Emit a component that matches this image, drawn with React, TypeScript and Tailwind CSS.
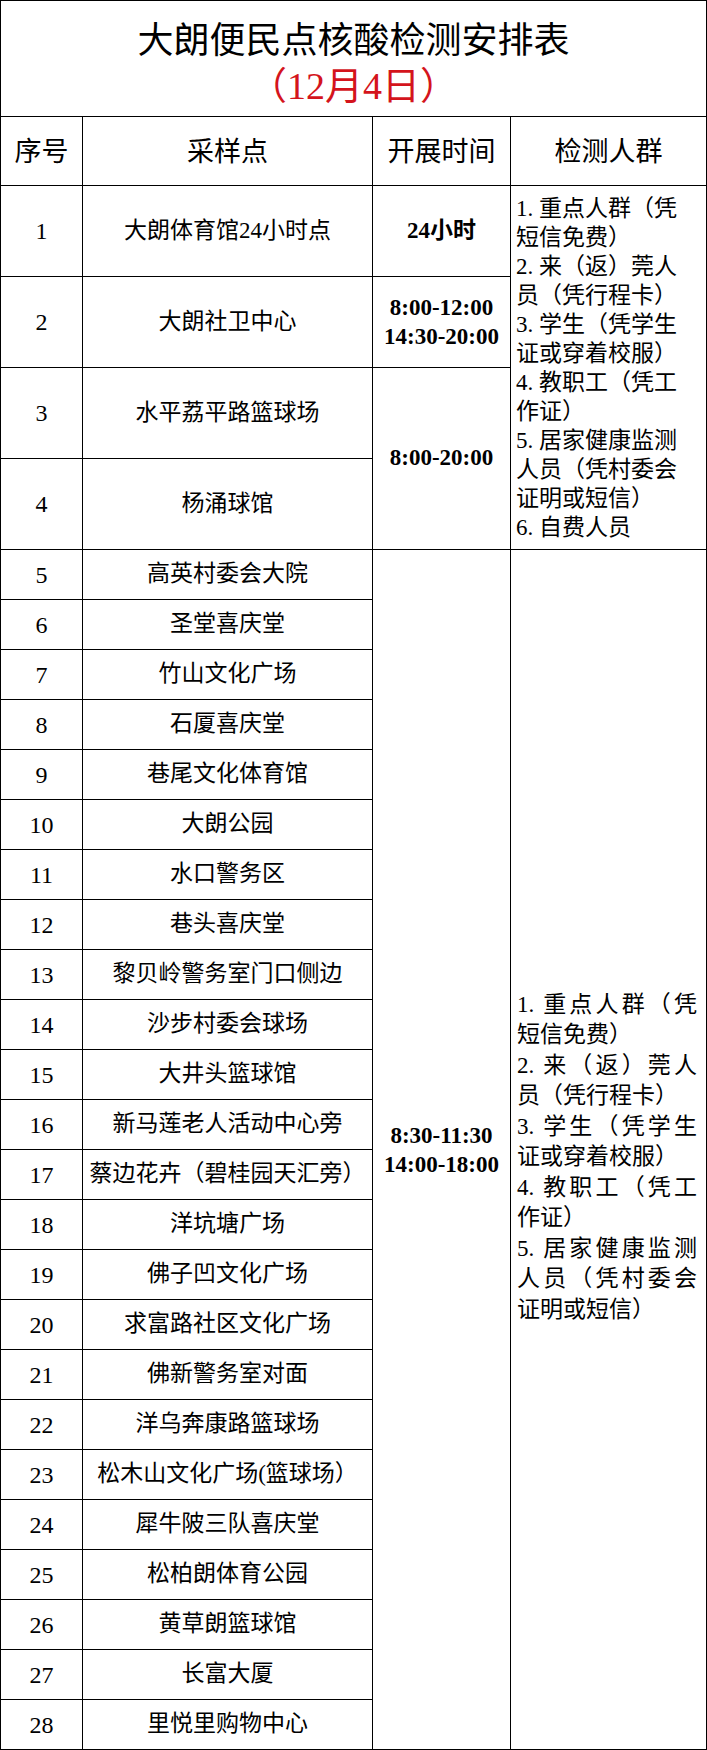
import React from "react";

const topRows = [
  { n: "1", name: "大朗体育馆24小时点" },
  { n: "2", name: "大朗社卫中心" },
  { n: "3", name: "水平荔平路篮球场" },
  { n: "4", name: "杨涌球馆" },
];

const lowerRows = [
  "高英村委会大院",
  "圣堂喜庆堂",
  "竹山文化广场",
  "石厦喜庆堂",
  "巷尾文化体育馆",
  "大朗公园",
  "水口警务区",
  "巷头喜庆堂",
  "黎贝岭警务室门口侧边",
  "沙步村委会球场",
  "大井头篮球馆",
  "新马莲老人活动中心旁",
  "蔡边花卉（碧桂园天汇旁）",
  "洋坑塘广场",
  "佛子凹文化广场",
  "求富路社区文化广场",
  "佛新警务室对面",
  "洋乌奔康路篮球场",
  "松木山文化广场(篮球场）",
  "犀牛陂三队喜庆堂",
  "松柏朗体育公园",
  "黄草朗篮球馆",
  "长富大厦",
  "里悦里购物中心",
];

const topPeople: string[][] = [
  ["1. 重点人群（凭", "短信免费）"],
  ["2. 来（返）莞人", "员（凭行程卡）"],
  ["3. 学生（凭学生", "证或穿着校服）"],
  ["4. 教职工（凭工", "作证）"],
  ["5. 居家健康监测", "人员（凭村委会", "证明或短信）"],
  ["6. 自费人员"],
];

const lowerPeople: string[][] = [
  ["1. 重点人群（凭", "短信免费）"],
  ["2. 来（返）莞人", "员（凭行程卡）"],
  ["3. 学生（凭学生", "证或穿着校服）"],
  ["4. 教职工（凭工", "作证）"],
  ["5. 居家健康监测", "人员（凭村委会", "证明或短信）"],
];

function Cell({ children, className = "" }: { children?: React.ReactNode; className?: string }) {
  return (
    <div className={"bg-white flex items-center justify-center text-black " + className}>
      {children}
    </div>
  );
}

export default function App() {
  return (
    <div className="w-[707px] h-[1750px] bg-black p-px flex flex-col gap-px font-['Liberation_Serif','Noto_Sans_CJK_SC',serif] text-black">
      <div className="h-[115px] bg-white flex flex-col items-center pt-[19px]">
        <div className="text-[36px] leading-[43px]">大朗便民点核酸检测安排表</div>
        <div className="text-[38px] leading-[43px] mt-[2px] text-[#d4141c]">（12月4日）</div>
      </div>
      <div className="flex-1 grid grid-cols-[81px_289px_137px_195px] grid-rows-[68px_repeat(4,90px)_repeat(24,49px)] gap-px">
        <Cell className="text-[27px] pt-[3px]">序号</Cell>
        <Cell className="text-[27px] pt-[3px]">采样点</Cell>
        <Cell className="text-[27px] pt-[3px]">开展时间</Cell>
        <Cell className="text-[27px] pt-[3px]">检测人群</Cell>

        {topRows.map((r, i) => (
          <React.Fragment key={r.n}>
            <Cell className="text-[24px]">{r.n}</Cell>
            <Cell className="text-[23px]">{r.name}</Cell>
            {i === 0 && <Cell className="text-[23px] font-bold">24小时</Cell>}
            {i === 0 && (
              <div className="row-span-4 bg-white flex flex-col justify-center pl-[5px] text-[23px] leading-[29px]">
                {topPeople.map((item, k) => (
                  <div key={k}>
                    {item.map((line, j) => (
                      <div key={j} className="whitespace-nowrap">{line}</div>
                    ))}
                  </div>
                ))}
              </div>
            )}
            {i === 1 && (
              <Cell className="flex-col text-[23px] leading-[29px] font-bold">
                <div>8:00-12:00</div>
                <div>14:30-20:00</div>
              </Cell>
            )}
            {i === 2 && (
              <Cell className="row-span-2 text-[23px] font-bold">8:00-20:00</Cell>
            )}
          </React.Fragment>
        ))}

        {lowerRows.map((name, i) => (
          <React.Fragment key={name}>
            <Cell className="text-[24px]">{i + 5}</Cell>
            <Cell className="text-[23px] whitespace-nowrap">{name}</Cell>
            {i === 0 && (
              <Cell className="row-span-24 flex-col text-[23px] leading-[29px] font-bold">
                <div>8:30-11:30</div>
                <div>14:00-18:00</div>
              </Cell>
            )}
            {i === 0 && (
              <div className="row-span-24 bg-white flex flex-col justify-center pl-[6px] pr-[9px] pt-[16px] text-[23px] leading-[30.5px]">
                {lowerPeople.map((item, k) => (
                  <div key={k}>
                    {item.map((line, j) => (
                      <div
                        key={j}
                        className={
                          j < item.length - 1
                            ? "whitespace-nowrap text-justify [text-align-last:justify]"
                            : "whitespace-nowrap"
                        }
                      >
                        {line}
                      </div>
                    ))}
                  </div>
                ))}
              </div>
            )}
          </React.Fragment>
        ))}
      </div>
    </div>
  );
}
